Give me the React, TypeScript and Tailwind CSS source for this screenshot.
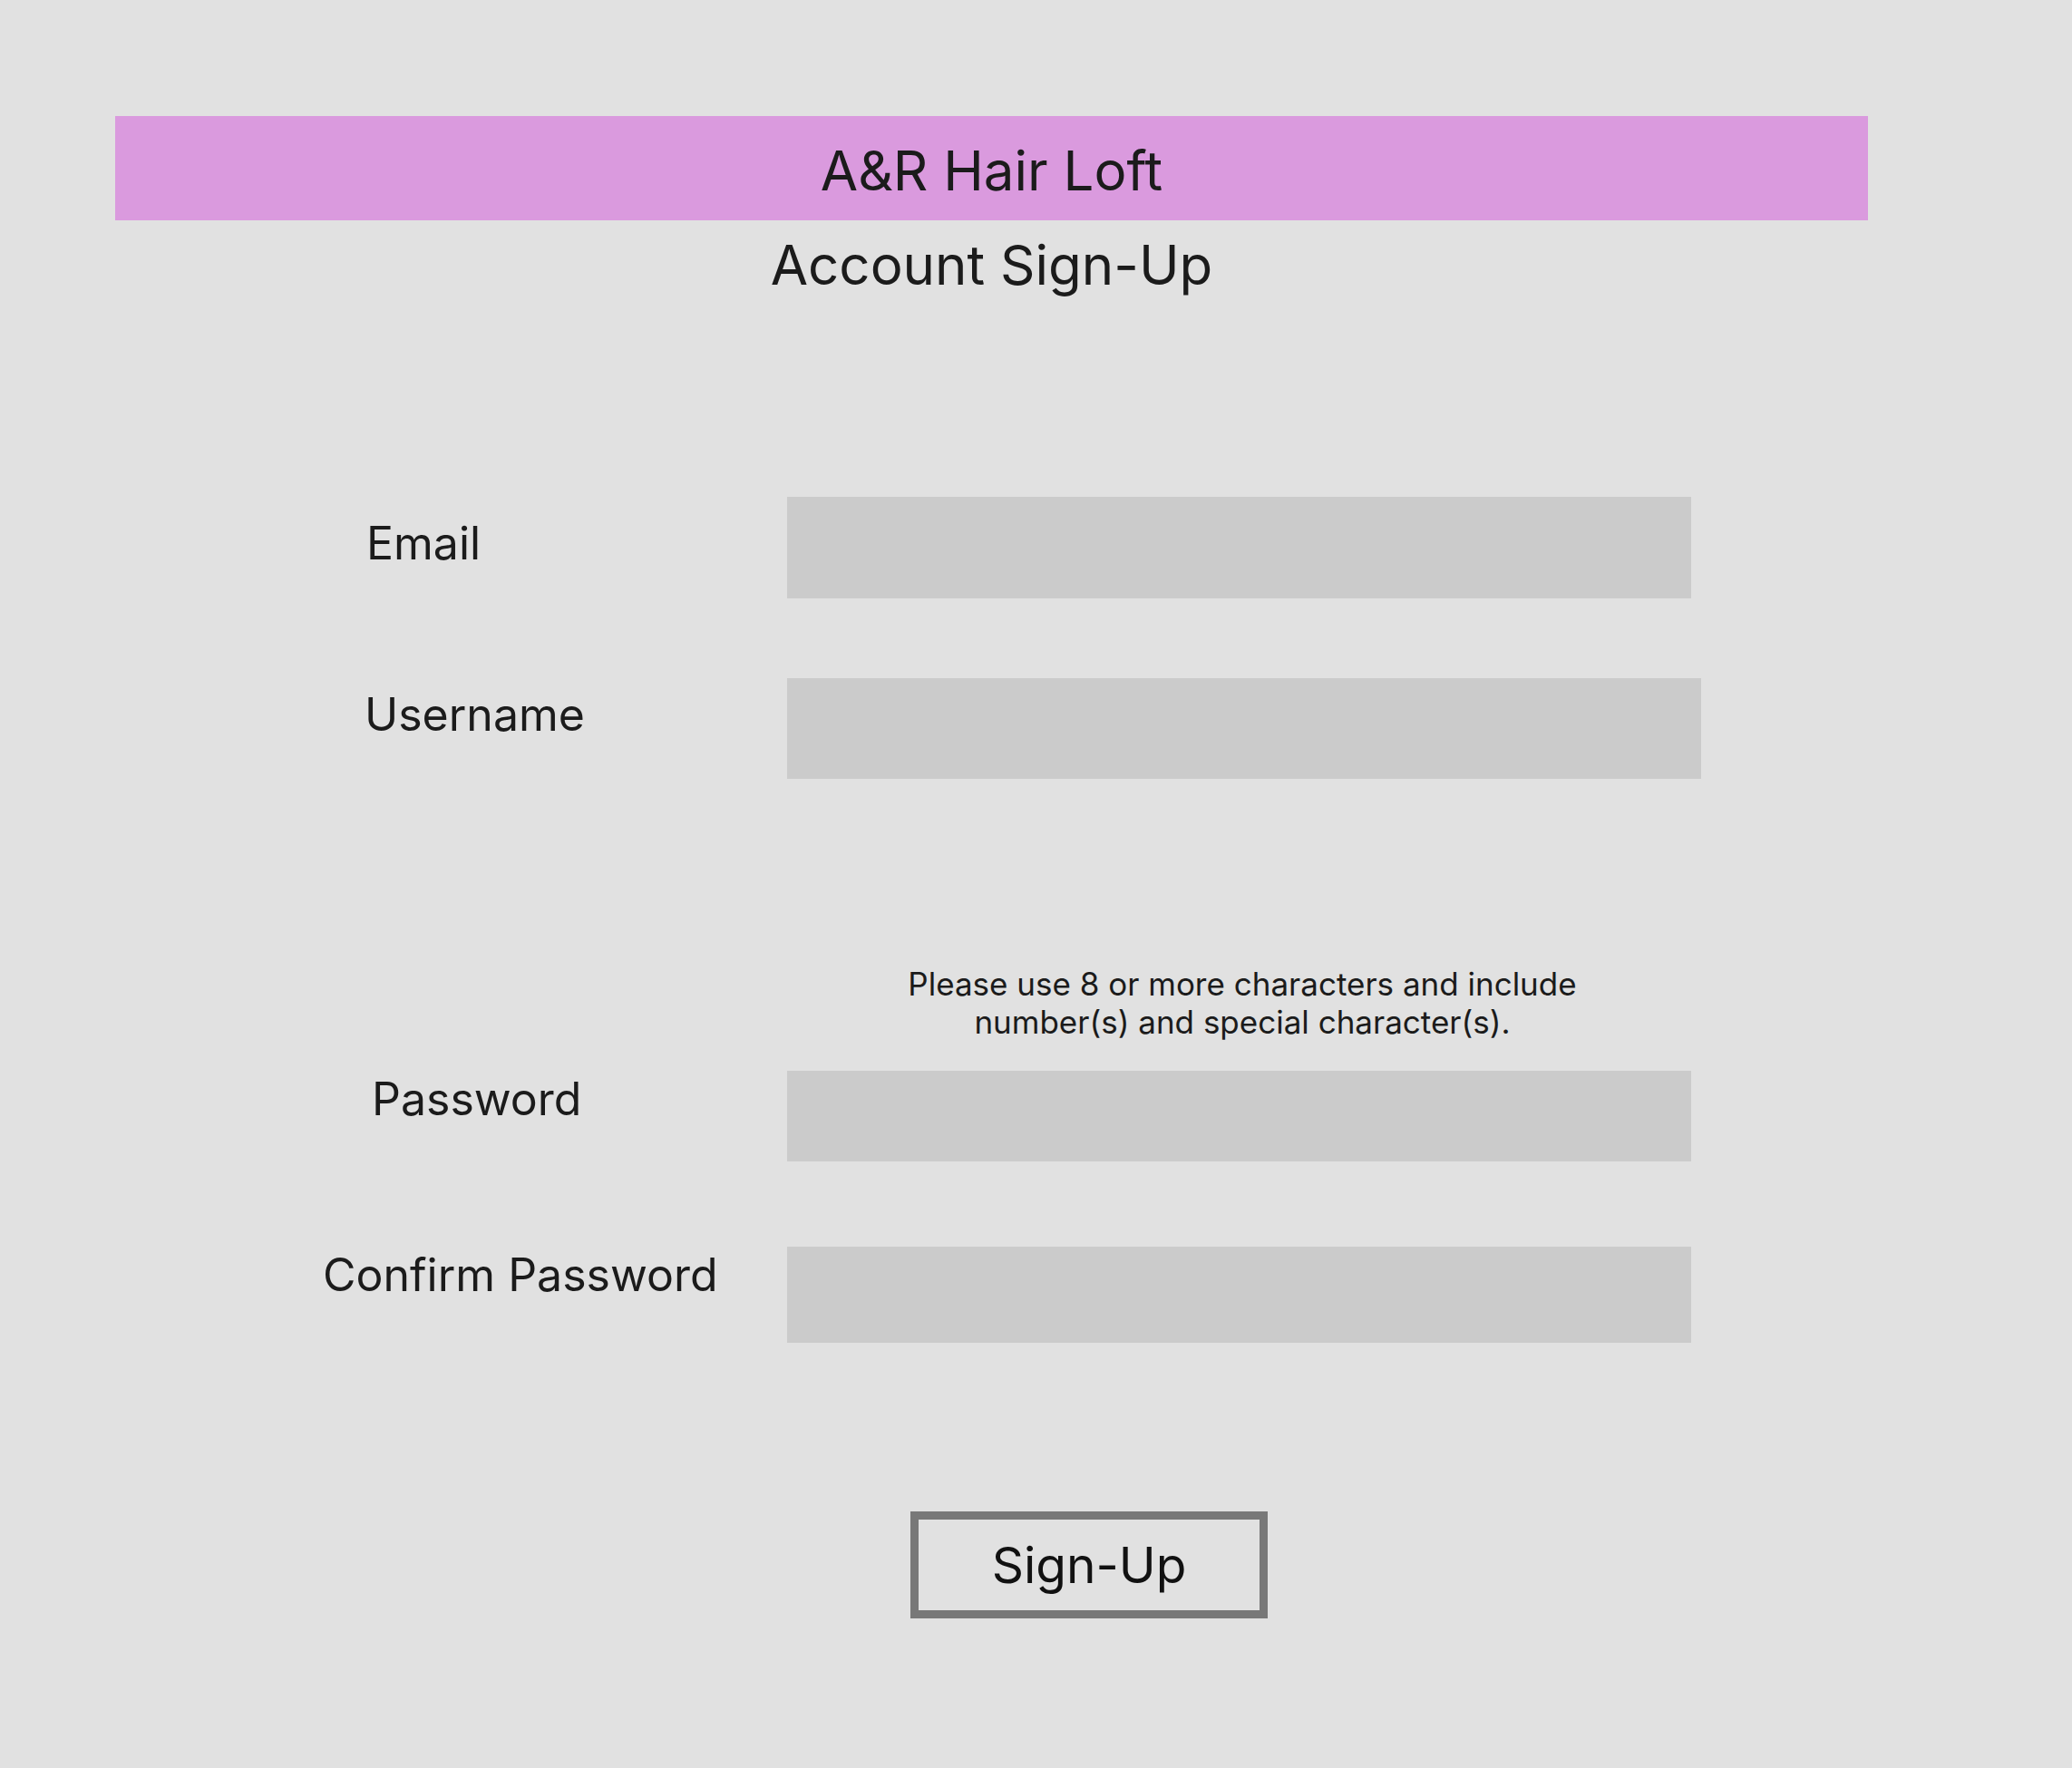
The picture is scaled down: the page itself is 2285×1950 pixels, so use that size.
import React from "react";

const Row = ({
  label,
  labelClass,
  inputClass,
}: {
  label: string;
  labelClass: string;
  inputClass: string;
}) => (
  <div className="flex items-start">
    <div className={`w-[868px] shrink-0 text-[50px] leading-none ${labelClass}`}>
      {label}
    </div>
    <div className={`bg-[#cbcbcb] ${inputClass}`}></div>
  </div>
);

const App = () => {
  return (
    <div className="min-h-[1950px] w-full bg-[#e1e1e1] text-[#1b1b1b] font-['Inter','Noto_Sans',sans-serif] flex flex-col">
      <div className="ml-[127px] mt-[128px] w-[1933px] h-[115px] bg-[#da9ade] flex items-center justify-center pt-[4px]">
        <h1 className="text-[60px] leading-none">A&amp;R Hair Loft</h1>
      </div>
      <div className="ml-[127px] mt-[19px] w-[1933px] text-center">
        <h2 className="text-[60px] leading-none">Account Sign-Up</h2>
      </div>

      <div className="mt-[226px] flex flex-col">
        <Row label="Email" labelClass="pl-[404px] pt-[26px]" inputClass="w-[997px] h-[112px]" />
        <div className="mt-[88px]">
          <Row label="Username" labelClass="pl-[402px] pt-[15px]" inputClass="w-[1008px] h-[111px]" />
        </div>

        <p className="mt-[205px] ml-[970px] w-[800px] text-center text-[35px] leading-[42px]">
          Please use 8 or more characters and include
          <br />
          number(s) and special character(s).
        </p>

        <div className="mt-[33px]">
          <Row label="Password" labelClass="pl-[410px] pt-[6px]" inputClass="w-[997px] h-[100px]" />
        </div>
        <div className="mt-[94px]">
          <Row label="Confirm Password" labelClass="pl-[356px] pt-[6px]" inputClass="w-[997px] h-[106px]" />
        </div>

        <div className="mt-[186px] ml-[1004px]">
          <button className="w-[394px] h-[118px] border-[9px] border-[#787878] text-[55px] leading-none text-[#111] flex items-center justify-center">
            Sign-Up
          </button>
        </div>
      </div>
    </div>
  );
};

export default App;
